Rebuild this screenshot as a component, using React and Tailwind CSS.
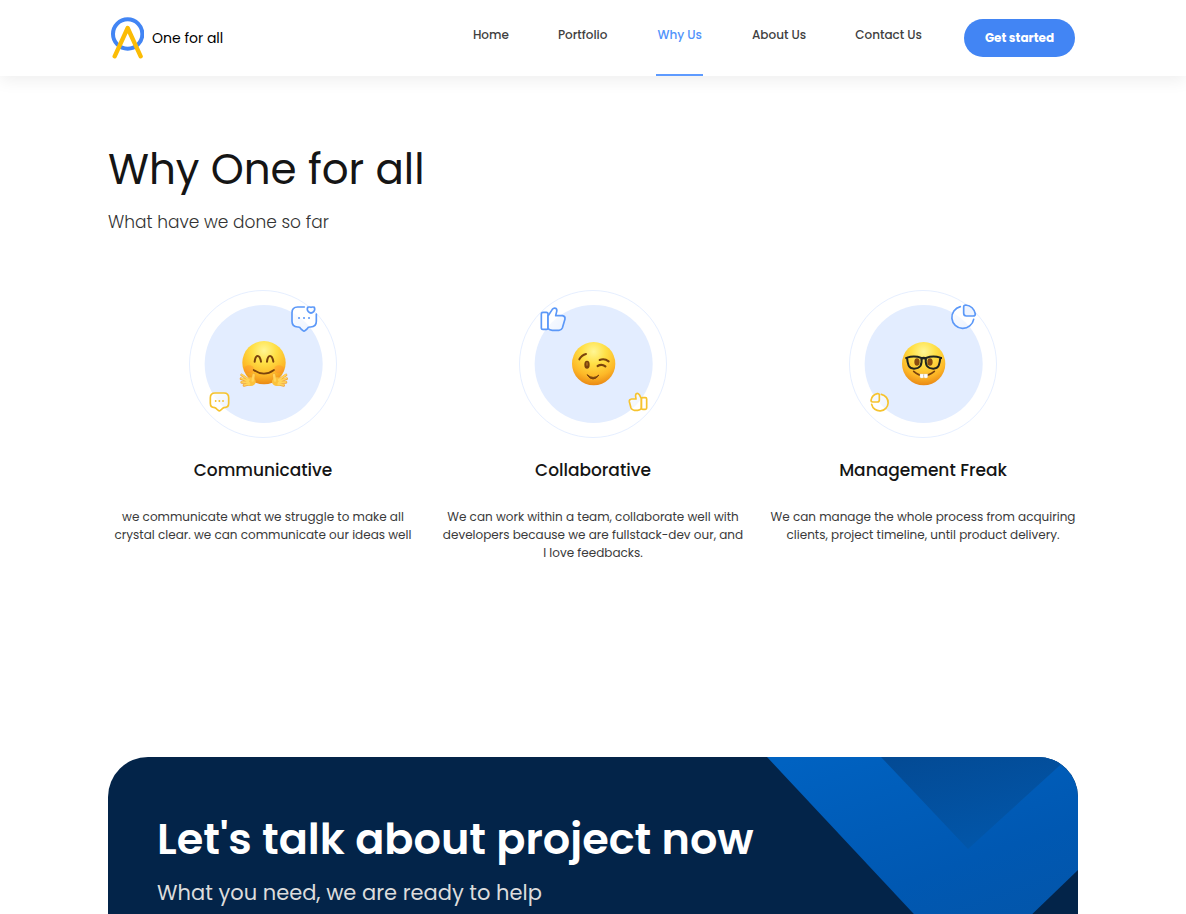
import React from "react";

const navLinks = [
  { label: "Home", href: "#home" },
  { label: "Portfolio", href: "#portfolio" },
  { label: "Why Us", href: "#why-us", active: true },
  { label: "About Us", href: "#about" },
  { label: "Contact Us", href: "#contact" },
];

function Logo() {
  return (
    <svg viewBox="27 50 105 126" className="h-[42px] w-[35px]" fill="none" aria-hidden="true">
      <circle cx="83" cy="101" r="44" stroke="#4285f4" strokeWidth="12" />
      <path d="M44 168 83 83l39 85" stroke="#fbbc05" strokeWidth="13" strokeLinecap="round" strokeLinejoin="round" />
    </svg>
  );
}

function Header() {
  return (
    <header className="bg-white shadow-[0_4px_16px_rgba(0,0,0,0.07)]">
      <div className="flex h-[76px] items-center justify-between px-[109px]">
        <a href="#home" className="flex items-center gap-2 text-sm text-black">
          <Logo />
          One for all
        </a>
        <div className="flex items-center gap-[42px] pr-[2px]">
          <nav className="flex gap-[49px] text-xs font-medium text-[#3f3f3f]">
            {navLinks.map((link) => (
              <a
                key={link.label}
                href={link.href}
                className={
                  link.active
                    ? "flex h-[76px] items-center border-b-2 border-[#5e9bff] px-px pb-1 text-[#5293fb]"
                    : "flex h-[76px] items-center border-b-2 border-transparent pb-1"
                }
              >
                {link.label}
              </a>
            ))}
          </nav>
          <button type="button" className="h-[38px] w-[111px] rounded-full bg-[#4285f4] text-xs font-bold text-white">
            Get started
          </button>
        </div>
      </div>
    </header>
  );
}

function Badge({ id, cx, cy, children, icons }) {
  return (
    <svg viewBox="28 30 444 444" className="h-[148px] w-[148px]" fill="none" aria-hidden="true">
      <defs>
        <radialGradient id={`${id}-face`} cx="0.5" cy="0.22" r="0.8">
          <stop offset="0" stopColor="#fff694" />
          <stop offset="0.35" stopColor="#ffe046" />
          <stop offset="0.72" stopColor="#fdb827" />
          <stop offset="1" stopColor="#e88413" />
        </radialGradient>
        <linearGradient id={`${id}-glass`} x1="0" y1="0" x2="1" y2="1">
          <stop offset="0" stopColor="#fff" stopOpacity="0.9" />
          <stop offset="1" stopColor="#fff" stopOpacity="0.3" />
        </linearGradient>
      </defs>
      <circle cx="250" cy="252" r="220.5" stroke="#e6efff" strokeWidth="3" />
      <circle cx="252" cy="252" r="177" fill="#e3edff" />
      <g strokeWidth="5" strokeLinecap="round" strokeLinejoin="round">
        {icons(`url(#${id}-glass)`)}
      </g>
      <g transform="translate(162 168)">
        <circle cx={cx} cy={cy} r="65" fill={`url(#${id}-face)`} />
        {children}
      </g>
    </svg>
  );
}

function Hand() {
  return (
    <g>
      <g stroke="#f2a53a" strokeWidth="8" strokeLinecap="round">
        <path d="M46 132 24 117M44 136 22 128M46 140 24 139M48 144 31 148" />
        <path d="M57 134 60 117" strokeWidth="10" />
      </g>
      <ellipse cx="51" cy="137" rx="15" ry="13" fill="#fcc23c" />
      <g stroke="#ffd55a" strokeWidth="5" strokeLinecap="round">
        <path d="M46 132 24 116M44 136 23 127M46 140 25 138M48 144 32 147" />
        <path d="M57 134 60 117" strokeWidth="7" />
      </g>
    </g>
  );
}

function HuggingBadge() {
  return (
    <Badge
      id="hug"
      cx={91}
      cy={80}
      icons={(glass) => (
        <>
          <g stroke="#5b98f8" fill={glass}>
            <path d="M374 81h-20q-17 0-17 17v26q0 17 17 17h2q5 0 8 6l6 5q3 3 6 0l6-5q3-6 8-6h3q17 0 17-17v-22" />
            <path d="M394 82q-6-2-10 0-3 8 2 13 8 8 16 0 5-5 2-13-4-2-10 0Z" />
          </g>
          <path d="M358 114h.1M373 114h.1M388 114h.1" stroke="#5b98f8" strokeWidth="6" />
          <path d="M106 339h27q14 0 14 14v17q0 13-14 13-4 1-7 5l-4 3q-3 3-6 0l-4-3q-3-4-7-5-13 0-13-13v-17q0-14 14-14Z" stroke="#f6c32e" fill={glass} />
          <path d="M108 363h.1M119 363h.1M130 363h.1" stroke="#f6c32e" strokeWidth="5.5" />
        </>
      )}
    >
      <ellipse cx="46" cy="100" rx="15" ry="12" fill="#ff7a2e" opacity="0.3" />
      <ellipse cx="136" cy="100" rx="15" ry="12" fill="#ff7a2e" opacity="0.3" />
      <g stroke="#7a430c" strokeWidth="6" strokeLinecap="round">
        <path d="M63 77q2-17 9-17t10 17M100 77q2-17 9-17t10 17" />
        <path d="M60 102q31 22 61 0" strokeWidth="5" />
      </g>
      <Hand />
      <g transform="translate(181 0) scale(-1 1)">
        <Hand />
      </g>
    </Badge>
  );
}

function WinkBadge() {
  return (
    <Badge
      id="wink"
      cx={90}
      cy={83}
      icons={(glass) => (
        <>
          <g stroke="#5b98f8" fill={glass}>
            <rect x="95" y="97" width="20" height="51" rx="5" />
            <path d="M115 108l13-20q4-5 10-3 5 3 3 10l-3 12h20q9 1 8 10l-8 27q-3 7-10 7h-20q-8-1-13-5Z" />
          </g>
          <g stroke="#f6c32e" fill={glass}>
            <rect x="395" y="353" width="16" height="35" rx="4" />
            <path d="M395 356l-6-12q-5-6-10-2-2 3-1 8l1 7h-13q-8 1-7 8l5 19q3 7 10 7h10q7-1 11-5Z" />
          </g>
        </>
      )}
    >
      <g stroke="#7a430c" strokeWidth="6" strokeLinecap="round">
        <path d="M47 70q7-13 20-16M108 72q14-6 27 4" />
        <path d="M102 90q12-7 23 1" strokeWidth="7" />
        <path d="M71 117q18 15 35 0-8 12-18 12t-17-12Z" fill="#7a430c" strokeWidth="3" />
      </g>
      <ellipse cx="70" cy="86" rx="8" ry="12" fill="#7a430c" />
      <ellipse cx="70" cy="84" rx="3" ry="6" fill="#a8681c" />
    </Badge>
  );
}

function NerdBadge() {
  return (
    <Badge
      id="nerd"
      cx={90}
      cy={83}
      icons={(glass) => (
        <>
          <g stroke="#5b98f8">
            <path d="M362 80A33 33 0 1 0 402 118" fill={glass} />
            <path d="M372 81q0-6 6-6 24 3 29 27 0 6-6 6h-21q-8 0-8-8Z" fill="#eef4ff" />
          </g>
          <g stroke="#f6c32e">
            <path d="M96 373A25 25 0 1 0 125 343" fill={glass} />
            <path d="M119 346q0-6-6-5-16 3-19 20 0 5 5 5h14q6 0 6-6Z" fill="#f6f9ff" />
          </g>
        </>
      )}
    >
      <ellipse cx="70" cy="78" rx="8" ry="11" fill="#8a4b10" />
      <ellipse cx="109" cy="78" rx="8" ry="11" fill="#8a4b10" />
      <path d="M60 106q30 26 62 0" stroke="#7a430c" strokeWidth="5" strokeLinecap="round" />
      <path d="M79 114h11v8q0 4-4 4h-3q-4 0-4-4ZM91 114h11v8q0 4-4 4h-3q-4 0-4-4Z" fill="#fff" stroke="#d9d2c4" />
      <g stroke="#20241f" strokeWidth="6" strokeLinejoin="round">
        <path d="M40 65q22-7 43 1 3 14-3 24-6 8-19 8-12 0-16-9-4-11-5-24Z" />
        <path d="M140 65q-22-7-43 1-3 14 3 24 6 8 19 8 12 0 16-9 4-11 5-24Z" />
        <path d="M82 68q8-4 16 0" strokeWidth="8" />
        <path d="M38 63v6M142 63v6" />
      </g>
    </Badge>
  );
}

const reasons = [
  {
    title: "Communicative",
    text: "we communicate what we struggle to make all crystal clear. we can communicate our ideas well",
    Art: HuggingBadge,
  },
  {
    title: "Collaborative",
    text: "We can work within a team, collaborate well with developers because we are fullstack-dev our, and I love feedbacks.",
    Art: WinkBadge,
  },
  {
    title: "Management Freak",
    text: "We can manage the whole process from acquiring clients, project timeline, until product delivery.",
    Art: NerdBadge,
  },
];

function WhyUs() {
  return (
    <section id="why-us" className="px-[108px] pt-[68px]">
      <h1 className="text-[42px] leading-[52px] text-[#151515]">Why One for all</h1>
      <p className="mt-3 text-[17px] leading-7 font-light text-[#333]">What have we done so far</p>
      <div className="mt-[54px] grid grid-cols-3 gap-5">
        {reasons.map(({ title, text, Art }) => (
          <article key={title} className="flex flex-col items-center px-0.5 text-center">
            <Art />
            <h2 className="mt-[18px] text-[17px] leading-7 font-medium text-[#151515]">{title}</h2>
            <p className="mt-6 text-xs leading-[18px] text-[#3a3a3a]">{text}</p>
          </article>
        ))}
      </div>
    </section>
  );
}

function CallToAction() {
  return (
    <section id="contact" className="mx-[108px] mt-[195px] flex grow flex-col">
      <div className="relative grow overflow-hidden rounded-t-[40px] bg-[#032449] px-[49px] pt-[50px]">
        <svg viewBox="0 0 311 217" className="absolute top-0 right-0 h-[217px] w-[311px]" aria-hidden="true">
          <defs>
            <linearGradient id="chevron" x1="0.1" y1="0" x2="0.6" y2="1">
              <stop offset="0" stopColor="#0062c1" />
              <stop offset="0.6" stopColor="#0058b2" />
              <stop offset="1" stopColor="#0455a8" />
            </linearGradient>
            <linearGradient id="notch" x1="0" y1="0" x2="0.5" y2="1">
              <stop offset="0" stopColor="#034a94" />
              <stop offset="1" stopColor="#0256a9" />
            </linearGradient>
          </defs>
          <path d="M0 0 203 217 311 113V0Z" fill="url(#chevron)" />
          <path d="M114 0 201 92 302 0Z" fill="url(#notch)" />
        </svg>
        <div className="relative">
          <h2 className="text-[43px] leading-[64px] font-semibold text-white">Let&apos;s talk about project now</h2>
          <p className="mt-[6px] text-[21px] leading-8 text-[#dcdcdc]">What you need, we are ready to help</p>
        </div>
      </div>
    </section>
  );
}

export default function App() {
  return (
    <div className="flex min-h-screen flex-col bg-white font-['Poppins','Inter',sans-serif]">
      <Header />
      <main className="flex grow flex-col">
        <WhyUs />
        <CallToAction />
      </main>
    </div>
  );
}
